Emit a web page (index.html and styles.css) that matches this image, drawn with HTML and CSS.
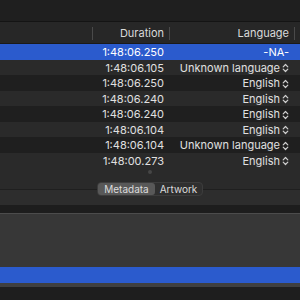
FILE: index.html
```html
<!DOCTYPE html>
<html lang="en">
<head>
  <meta charset="UTF-8"/>
  <title>Tracks</title>
  <link rel="stylesheet" href="styles.css">
</head>
<body>
  <div class="toolbar"></div>

  <!-- track table -->
  <div class="table">
    <div class="head">
      <div class="hcell"><span class="sep"></span></div>
      <div class="hcell"><span>Duration</span><span class="sep"></span></div>
      <div class="hcell"><span>Language</span><span class="sep"></span></div>
      <div class="hcell"></div>
    </div>
    <div class="row selected">
      <div class="cell"></div><div class="cell">1:48:06.250</div><div class="cell">-NA-</div><div class="cell"></div>
    </div>
    <div class="row">
      <div class="cell"></div><div class="cell">1:48:06.105</div><div class="cell">Unknown language<svg class="updown" viewBox="0 0 7 10"><path d="M1.2 3.8 3.5 1.5 5.8 3.8M1.2 6.2 3.5 8.5 5.8 6.2"/></svg></div><div class="cell"></div>
    </div>
    <div class="row">
      <div class="cell"></div><div class="cell">1:48:06.250</div><div class="cell">English<svg class="updown" viewBox="0 0 7 10"><path d="M1.2 3.8 3.5 1.5 5.8 3.8M1.2 6.2 3.5 8.5 5.8 6.2"/></svg></div><div class="cell"></div>
    </div>
    <div class="row">
      <div class="cell"></div><div class="cell">1:48:06.240</div><div class="cell">English<svg class="updown" viewBox="0 0 7 10"><path d="M1.2 3.8 3.5 1.5 5.8 3.8M1.2 6.2 3.5 8.5 5.8 6.2"/></svg></div><div class="cell"></div>
    </div>
    <div class="row">
      <div class="cell"></div><div class="cell">1:48:06.240</div><div class="cell">English<svg class="updown" viewBox="0 0 7 10"><path d="M1.2 3.8 3.5 1.5 5.8 3.8M1.2 6.2 3.5 8.5 5.8 6.2"/></svg></div><div class="cell"></div>
    </div>
    <div class="row">
      <div class="cell"></div><div class="cell">1:48:06.104</div><div class="cell">English<svg class="updown" viewBox="0 0 7 10"><path d="M1.2 3.8 3.5 1.5 5.8 3.8M1.2 6.2 3.5 8.5 5.8 6.2"/></svg></div><div class="cell"></div>
    </div>
    <div class="row">
      <div class="cell"></div><div class="cell">1:48:06.104</div><div class="cell">Unknown language<svg class="updown" viewBox="0 0 7 10"><path d="M1.2 3.8 3.5 1.5 5.8 3.8M1.2 6.2 3.5 8.5 5.8 6.2"/></svg></div><div class="cell"></div>
    </div>
    <div class="row">
      <div class="cell"></div><div class="cell">1:48:00.273</div><div class="cell">English<svg class="updown" viewBox="0 0 7 10"><path d="M1.2 3.8 3.5 1.5 5.8 3.8M1.2 6.2 3.5 8.5 5.8 6.2"/></svg></div><div class="cell"></div>
    </div>
  </div>

  <!-- scroll dot + tab switch -->
  <div class="under">
    <span class="dot"></span>
  </div>
  <div class="tabs">
    <div class="segment">
      <span class="seg on">Metadata</span>
      <span class="seg">Artwork</span>
    </div>
  </div>
  <div class="tabbox"></div>
  <div class="split"></div>

  <!-- lower panel -->
  <div class="panel"></div>
  <div class="panel-sel"></div>
  <div class="panel-foot"></div>
  <div class="bottom"></div>
</body>
</html>
```

FILE: styles.css
```css
html, body {
  margin: 0; padding: 0;
  width: 300px; height: 300px;
  overflow: hidden;
  background: #1e1e1e;
  font-family: Inter, "Liberation Sans", sans-serif;
  font-size: 11px;
}
body {
  display: flex;
  flex-direction: column;
}

.toolbar {
  height: 21px;
  background: #1f1f1f;
  border-bottom: 1px solid #141414;
}

/* table */
.head, .row {
  display: grid;
  grid-template-columns: 93px 77px 125px 1fr;
}
.head {
  height: 21px;
  background: #272727;
  border-bottom: 1px solid #1a1a1a;
  color: #dadada;
}
.hcell {
  display: flex;
  align-items: center;
  justify-content: flex-end;
  padding-top: 1px;
}
.sep {
  width: 1px;
  height: 13px;
  margin-left: 5px;
  background: #4a4a4a;
}
.row {
  height: 15.5px;
  background: #1f1f1f;
  color: #e0e0e0;
}
.row:nth-child(odd) { background: #2a2a2a; }
.row.selected { background: #2b5bcd; color: #fff; }
.cell {
  display: flex;
  align-items: center;
  justify-content: flex-end;
  padding-right: 6px;
  padding-top: 1px;
  line-height: 15px;
  white-space: nowrap;
}
.updown {
  width: 7px; height: 10px;
  margin-left: 2px;
  fill: none;
  stroke: #cfcfcf;
  stroke-width: 1.2;
  stroke-linecap: round;
  stroke-linejoin: round;
}

/* area under the table */
.under {
  height: 14px;
  background: #2a2a2a;
  display: flex;
  justify-content: center;
}
.dot {
  width: 4px; height: 4px;
  margin-top: 2px;
  border-radius: 50%;
  background: #464646;
}
.tabs {
  height: 14px;
  display: flex;
  justify-content: center;
  background: linear-gradient(#2a2a2a 0 7px, #1f1f1f 7px 8px, #2d2d2d 8px);
}
.segment {
  display: flex;
  width: 104px;
  border: 1px solid #3c3c3c;
  border-radius: 4px;
  background: #2f2f2f;
}
.seg {
  flex: 1;
  display: flex;
  align-items: center;
  justify-content: center;
  font-size: 10px;
  color: #dcdcdc;
  border-radius: 3px;
}
.seg.on { background: #585858; flex: 0 0 57px; }
.tabbox {
  height: 9px;
  background: #2d2d2d;
}
.split {
  height: 8px;
  background: #1d1d1d;
  border-bottom: 1px solid #4c4c4c;
}

.panel { height: 53px; background: #373737; }
.panel-sel { height: 16px; background: #2b5bcd; }
.panel-foot { height: 4px; background: #3f3f3f; }
.bottom { flex: 1; background: #1e1e1e; }
```
